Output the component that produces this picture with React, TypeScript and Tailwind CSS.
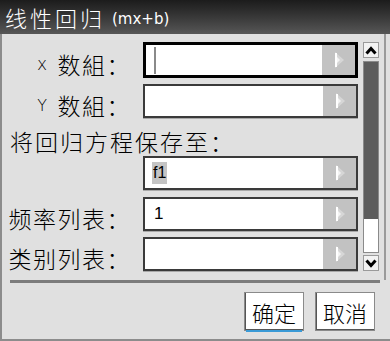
const cjk = { fontFamily: '"Noto Sans CJK SC", "Noto Sans", sans-serif' }
const latin = { fontFamily: '"DejaVu Sans", sans-serif' }

function Arrow() {
  return (
    <div className="flex h-full w-[33px] shrink-0 items-center justify-center bg-[#c2c2c2]">
      <svg width="12" height="20" viewBox="0 0 12 20">
        <polygon points="2,2 11,10 2,18" fill="#d6d6d6" />
        <polygon points="2,5 7,10 2,15" fill="#f4f4f4" />
        <rect x="2" y="3" width="2" height="14" fill="#ffffff" />
      </svg>
    </div>
  )
}

function Field({ focused, children }: { focused?: boolean; children?: React.ReactNode }) {
  return (
    <div
      className={
        focused
          ? 'flex h-[36px] w-[215px] border-[3px] border-black bg-white'
          : 'flex h-[34px] w-[215px] border-2 border-[#3a3a3a] bg-white shadow-[0_1px_0_#a8a8a8]'
      }
    >
      <div className="flex flex-1 items-center pl-[7px]">{children}</div>
      <Arrow />
    </div>
  )
}

function Label({ children }: { children: React.ReactNode }) {
  return (
    <div className="flex w-[141px] shrink-0 items-end justify-end pr-[12px] pt-[8px] text-[23px] font-light leading-none tracking-[1.5px] text-black" style={cjk}>
      {children}
    </div>
  )
}

export default function App() {
  return (
    <div className="flex h-[341px] w-[390px] flex-col overflow-hidden bg-[#e0e0e0]">
      <div className="flex h-[34px] shrink-0 items-center gap-[7px] bg-gradient-to-b from-[#1c1c1c] to-[#575757] pl-[5px] text-white">
        <span className="text-[22px] font-light leading-none tracking-[3px]" style={cjk}>线性回归</span>
        <span className="pt-[5px] text-[15px] leading-none" style={latin}>(mx+b)</span>
      </div>

      <div className="flex flex-1 border-b-2 border-l-2 border-[#8c8c8c]">
        <div className="flex flex-1 flex-col">
          <div className="flex flex-1">
            <div className="flex flex-col pt-[8px]">
              <div className="flex items-center">
                <Label>
                  <span className="mb-[3px] mr-[9px] text-[17px] font-extralight" style={latin}>x</span>数組：
                </Label>
                <Field focused>
                  <div className="ml-[1px] h-[27px] w-[2px] bg-[#8a8a8a]" />
                </Field>
              </div>
              <div className="mt-[6px] flex items-center">
                <Label>
                  <span className="mb-[3px] mr-[9px] text-[16px] font-extralight" style={latin}>Y</span>数組：
                </Label>
                <Field />
              </div>
              <div className="flex h-[38px] items-center pl-[8px] pt-[8px] text-[23px] font-light leading-none tracking-[2px]" style={cjk}>
                将回归方程保存至：
              </div>
              <div className="flex items-center">
                <div className="w-[141px] shrink-0" />
                <Field>
                  <span className="bg-[#c4c4c4] px-[1px] text-[16px] leading-[22px]" style={{ fontFamily: '"Liberation Sans", sans-serif' }}>f1</span>
                </Field>
              </div>
              <div className="mt-[7px] flex items-center">
                <Label>频率列表：</Label>
                <Field>
                  <span className="pl-[2px] text-[17px]" style={{ fontFamily: '"Liberation Sans", sans-serif' }}>1</span>
                </Field>
              </div>
              <div className="mt-[6px] flex items-center">
                <Label>类别列表：</Label>
                <Field />
              </div>
            </div>

            <div className="ml-[5px] flex w-[16px] flex-col pt-[8px]">
              <div className="flex h-[16px] items-center justify-center border border-[#9a9a9a] bg-[#f2f2f2]">
                <svg width="12" height="9" viewBox="0 0 12 9">
                  <polyline points="1.5,7.5 6,2.5 10.5,7.5" fill="none" stroke="#000" strokeWidth="3" />
                </svg>
              </div>
              <div className="mt-[3px] flex h-[192px] flex-col border border-[#8a8a8a] bg-white">
                <div className="h-[157px] bg-[#5c5c5c]" />
              </div>
              <div className="mt-[2px] flex h-[16px] items-center justify-center border border-[#9a9a9a] bg-[#f2f2f2]">
                <svg width="12" height="9" viewBox="0 0 12 9">
                  <polyline points="1.5,1.5 6,6.5 10.5,1.5" fill="none" stroke="#000" strokeWidth="3" />
                </svg>
              </div>
            </div>
            <div className="ml-[5px] w-[2px] bg-[#9a9a9a]" />
            <div className="w-[4px]" />
          </div>

          <div className="mx-[8px] mb-[8px] mr-[10px] h-[3px] bg-[#7c7c7c]" />

          <div className="flex h-[48px] justify-end gap-[11px] pr-[15px] pt-[1px]">
            <div className="relative flex h-[39px] w-[60px] items-center justify-center border border-[#8a8a8a] bg-white text-[22px] font-light leading-none shadow-[inset_1px_-1px_0_#555]" style={cjk}>
              确定
              <div className="absolute -bottom-[2px] left-[1px] h-[2px] w-[56px] bg-[#3a9ad6]" />
            </div>
            <div className="flex h-[39px] w-[60px] items-center justify-center border border-[#8a8a8a] bg-white text-[22px] font-light leading-none shadow-[inset_1px_-1px_0_#555]" style={cjk}>
              取消
            </div>
          </div>
        </div>
      </div>
    </div>
  )
}
